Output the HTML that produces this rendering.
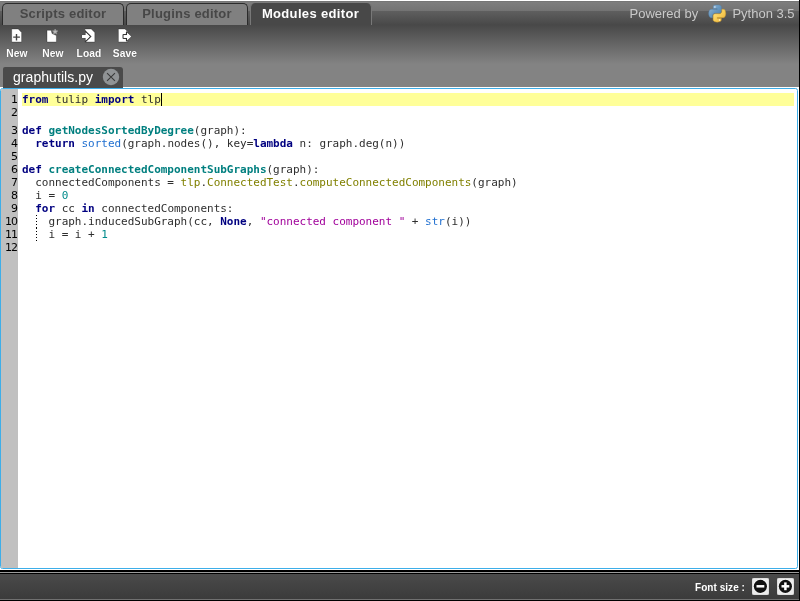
<!DOCTYPE html>
<html>
<head>
<meta charset="utf-8">
<title>Modules editor</title>
<style>
html,body{margin:0;padding:0;}
body{width:800px;height:601px;overflow:hidden;background:#000;position:relative;font-family:"Liberation Sans","DejaVu Sans",sans-serif;}
.abs{position:absolute;}
#root{position:absolute;left:0;top:0;width:799px;height:600px;background:#fff;overflow:hidden;will-change:transform;-webkit-font-smoothing:antialiased;}
#hdr{position:absolute;left:0;top:1px;width:799px;height:86px;
 background:linear-gradient(to bottom,#6d6d6d 0px,#7e7e7e 1px,#737373 10px,#5f5f5f 10px,#484848 24px,#838383 63px,#838383 86px);}
.tab{position:absolute;top:3px;height:21px;border:1px solid #2b2b2b;border-bottom:none;border-radius:5px 5px 0 0;background:#808080;
 color:#474747;font-weight:bold;font-size:13px;line-height:19px;text-align:center;white-space:nowrap;letter-spacing:.2px;}
.tab.act{background:#484848;border-color:#787878;border-top:none;height:22px;line-height:21px;color:#fff;}
.tb{position:absolute;top:47px;letter-spacing:.1px;width:36px;text-align:center;color:#fff;font-weight:bold;font-size:11px;line-height:12px;white-space:nowrap;
 text-shadow:0 0 1px rgba(40,40,40,.6);transform:scaleX(.93);transform-origin:50% 50%;}
.ico{position:absolute;top:27px;width:20px;height:16px;}
.pw{position:absolute;top:6px;color:#c9c9c9;font-size:13px;line-height:16px;white-space:nowrap;}
#ftab{position:absolute;left:3px;top:67px;width:120px;height:21px;background:#4a4a4a;border-radius:2px 3px 0 0;}
#ftab span{position:absolute;left:10px;top:0px;letter-spacing:.06px;color:#fff;font-size:14px;line-height:20px;white-space:nowrap;}
#ed{position:absolute;left:0;top:88px;width:796px;height:479px;border:1px solid #3daee9;border-radius:2.5px;background:#fff;overflow:hidden;}
#gut{position:absolute;left:0;top:0;width:17px;height:479px;background:#c0c0c0;}
.ln{position:absolute;left:0;width:17px;text-align:right;font-family:"DejaVu Sans",sans-serif;font-size:11px;line-height:13px;color:#000;height:13px;}
.cl{position:absolute;left:21px;font-family:"DejaVu Sans Mono","Liberation Mono",monospace;font-size:11px;line-height:13px;height:13px;white-space:pre;color:#2e2e2e;letter-spacing:-0.015px;}
.k{color:#000080;font-weight:bold;}
.f{color:#007f7f;font-weight:bold;}
.b{color:#1f6fd0;}
.o{color:#808000;}
.n{color:#008b8b;}
.s{color:#a0009a;}
#bot{position:absolute;left:0;top:569px;width:799px;height:31px;background:#000;}
#botg{position:absolute;left:0;top:5px;width:799px;height:25px;background:linear-gradient(to bottom,#4a4a4a,#3b3b3b);}
.sq{position:absolute;top:578px;width:17px;height:17px;background:#ececec;border-radius:2px;box-shadow:inset 0 0 0 .5px #d0d0d0;}
</style>
</head>
<body>
<div id="root">
 <div id="hdr"></div>

 <div class="tab" style="left:2px;width:120px;">Scripts editor</div>
 <div class="tab" style="left:126px;width:120px;">Plugins editor</div>
 <div class="tab act" style="left:250px;width:120px;letter-spacing:.34px;text-indent:-1px;">Modules editor</div>

 <div class="pw" style="left:629.5px;">Powered by</div>
 <div class="pw" style="left:732.4px;">Python 3.5</div>
 <svg class="abs" style="left:708px;top:4px;" width="20" height="20" viewBox="0 0 20 20"><g transform="translate(.7,.9) scale(.1535)">
  <defs>
   <linearGradient id="pb" x1="0" y1="0" x2="1" y2="1"><stop offset="0" stop-color="#9cbedb"/><stop offset=".5" stop-color="#6898c0"/><stop offset="1" stop-color="#4c7ba5"/></linearGradient>
   <linearGradient id="py" x1="0" y1="0" x2="1" y2="1"><stop offset="0" stop-color="#ffe98f"/><stop offset=".55" stop-color="#f8cb52"/><stop offset="1" stop-color="#e4ab38"/></linearGradient>
  </defs>
  <path fill="url(#pb)" stroke="#5480a6" stroke-width="3" d="M54.9 0C50.3 0 46 .4 42.100000000000001 1.1C30.8 3.1 28.7 7.3 28.7 15V25.3H55.5V28.7H18.6C10.8 28.7 4 33.3 1.9 42.300000000000004C-.6 52.5 -.7 58.800000000000004 1.9 69.5C3.8 77.4 8.3 83.100000000000009 16.100000000000001 83.100000000000009H25.4V70.8C25.4 62 33 54.2 42.100000000000001 54.2H68.9C76.3 54.2 82.3 48.1 82.3 40.6V15C82.3 7.8 76.2 2.3 68.9 1.1C64.3 .3 59.5 0 54.9 0Z"/>
  <path fill="url(#py)" stroke="#c9962a" stroke-width="3" d="M85.6 28.7V40.6C85.6 49.800000000000004 77.8 57.6 68.9 57.6H42.100000000000001C34.800000000000004 57.6 28.7 63.800000000000004 28.7 71.2V96.7C28.7 104 35 108.3 42.100000000000001 110.3C50.6 112.8 58.7 113.3 68.9 110.3C75.6 108.4 82.3 104.5 82.3 96.7V86.5H55.5V83.100000000000009H95.7C103.5 83.100000000000009 106.4 77.7 109.100000000000009 69.5C111.9 61.1 111.8 53 109.100000000000009 42.300000000000004C107.2 34.5 103.5 28.7 95.7 28.7Z"/>
  <circle cx="40.4" cy="13.3" r="5.2" fill="#e8f0f8"/><circle cx="70.6" cy="98.4" r="5.2" fill="#fff8e0"/>
 </g></svg>

 <!-- toolbar -->
 <svg class="abs" style="left:0;top:26px;" width="150" height="20" viewBox="0 26 150 20">
  <g fill="#fff" stroke="rgba(0,0,0,.28)" stroke-width="1" stroke-linejoin="round">
   <path d="M11.7 29H18.2L21.6 32.4V42H11.7Z"/>
   <path d="M47 30.3H51.2L52 33.5L56.4 35.5V42H47Z"/>
   <path d="M84.9 29H91.2L94.8 32.4V42H84.9Z"/>
   <path d="M118.4 29H125L127.8 31.8V42H118.4Z"/>
  </g>
  <path d="M13.2 37.1H19.9M16.5 34V40.4" stroke="#444" stroke-width="1.4" fill="none"/>
  <path d="M55.15 29.00L55.94 30.66L57.77 30.90L56.43 32.17L56.77 33.97L55.15 33.10L53.53 33.97L53.87 32.17L52.53 30.90L54.36 30.66Z" fill="#bdbdbd" stroke="#969696" stroke-width=".7" stroke-linejoin="round"/>
  <clipPath id="c3"><path d="M84.9 29H91.2L94.8 32.4V42H84.9Z"/></clipPath>
  <clipPath id="c4"><path d="M118.4 29H125L127.8 31.8V42H118.4Z"/></clipPath>
  <path d="M80 35H85.6V32.2L90 36.5L85.6 40.8V38H80Z" fill="none" stroke="#383838" stroke-width="2.2" clip-path="url(#c3)"/>
  <path d="M82 35H85.6V32.2L90 36.5L85.6 40.8V38H82Z" fill="#fff" stroke="rgba(0,0,0,.18)" stroke-width=".8"/>
  <path d="M82 35.2H85.8V32.8L89.6 36.5L85.8 40.2V37.8H82Z" fill="#fff"/>
  <path d="M123.6 35H127V32.4L131.2 36.5L127 40.6V38H123.6Z" fill="none" stroke="#383838" stroke-width="2.2" stroke-linejoin="round" clip-path="url(#c4)"/>
  <path d="M123.6 35H127V32.4L131.2 36.5L127 40.6V38H123.6Z" fill="#fff" stroke="rgba(0,0,0,.18)" stroke-width=".8"/>
  <path d="M123.8 35.2H127.2V33L130.8 36.5L127.2 40V37.8H123.8Z" fill="#fff"/>
 </svg>
 <div class="tb" style="left:-1.2px;">New</div>
 <div class="tb" style="left:34.8px;">New</div>
 <div class="tb" style="left:70.8px;">Load</div>
 <div class="tb" style="left:107px;">Save</div>

 <!-- file tab -->
 <div class="abs" style="left:0;top:87px;width:799px;height:1px;background:#fff;"></div>
 <div id="ftab"><span>graphutils.py</span>
  <svg class="abs" style="left:99px;top:1px;" width="18" height="18" viewBox="0 0 18 18"><circle cx="9" cy="9" r="8.2" fill="#909395"/><path d="M5.05 5.05L12.95 12.95M12.95 5.05L5.05 12.95" stroke="#383838" stroke-width="1.05"/></svg>
 </div>

 <!-- editor -->
 <div id="ed">
  <div id="gut"></div>
  <div class="abs" style="left:0;top:-1px;width:796px;height:480px;">
  <div class="abs" style="left:21px;top:5px;width:772px;height:13px;background:#ffff99;"></div>
  <div class="ln" style="top:5px;">1</div>
  <div class="ln" style="top:18px;">2</div>
  <div class="ln" style="top:36px;">3</div>
  <div class="ln" style="top:49px;">4</div>
  <div class="ln" style="top:62px;">5</div>
  <div class="ln" style="top:75px;">6</div>
  <div class="ln" style="top:88px;">7</div>
  <div class="ln" style="top:101px;">8</div>
  <div class="ln" style="top:114px;">9</div>
  <div class="ln" style="top:127px;letter-spacing:-1px;width:16px;">10</div>
  <div class="ln" style="top:140px;letter-spacing:-1px;width:16px;">11</div>
  <div class="ln" style="top:153px;letter-spacing:-1px;width:16px;">12</div>

  <div class="cl" style="top:5px;"><span class="k">from</span> tulip <span class="k">import</span> tlp</div>
  <div class="abs" style="left:160px;top:5px;width:1px;height:13px;background:#000;"></div>
  <div class="cl" style="top:36px;"><span class="k">def</span> <span class="f">getNodesSortedByDegree</span>(graph):</div>
  <div class="cl" style="top:49px;">  <span class="k">return</span> <span class="b">sorted</span>(graph.nodes(), key=<span class="k">lambda</span> n: graph.deg(n))</div>
  <div class="cl" style="top:75px;"><span class="k">def</span> <span class="f">createConnectedComponentSubGraphs</span>(graph):</div>
  <div class="cl" style="top:88px;">  connectedComponents = <span class="o">tlp</span>.<span class="o">ConnectedTest</span>.<span class="o">computeConnectedComponents</span>(graph)</div>
  <div class="cl" style="top:101px;">  i = <span class="n">0</span></div>
  <div class="cl" style="top:114px;">  <span class="k">for</span> cc <span class="k">in</span> connectedComponents:</div>
  <div class="cl" style="top:127px;">    graph.inducedSubGraph(cc, <span class="k">None</span>, <span class="s">"connected component "</span> + <span class="b">str</span>(i))</div>
  <div class="cl" style="top:140px;">    i = i + <span class="n">1</span></div>
  <div class="abs" style="left:35px;top:127px;width:1px;height:13px;background:repeating-linear-gradient(to bottom,#000 0,#000 1px,transparent 1px,transparent 3px);"></div>
  <div class="abs" style="left:35px;top:140px;width:1px;height:13px;background:repeating-linear-gradient(to bottom,#000 0,#000 1px,transparent 1px,transparent 3px);"></div>
  </div>
 </div>

 <!-- bottom bar -->
 <div id="bot">
  <div class="abs" style="left:0;top:0;width:799px;height:1px;background:#fff;"></div>
  <div class="abs" style="left:0;top:3px;width:799px;height:1px;background:#9c9c9c;"></div>
  <div id="botg"></div>
  <div class="abs" style="left:0;top:30px;width:799px;height:1px;background:#707070;"></div>
 </div>
 <div class="abs" style="left:695px;top:581px;color:#fff;font-weight:bold;font-size:10px;letter-spacing:.05px;line-height:13px;white-space:nowrap;">Font size :</div>
 <div class="sq" style="left:752px;"><svg class="abs" style="left:0;top:0;" width="17" height="17" viewBox="0 0 17 17"><circle cx="8.4" cy="8.3" r="7.1" fill="#fff"/><circle cx="8.4" cy="8.3" r="6.6" fill="#111"/><rect x="4.5" y="7.05" width="7.8" height="2.5" fill="#fff"/></svg></div>
 <div class="sq" style="left:777px;"><svg class="abs" style="left:0;top:0;" width="17" height="17" viewBox="0 0 17 17"><circle cx="8.4" cy="8.3" r="7.1" fill="#fff"/><circle cx="8.4" cy="8.3" r="6.6" fill="#111"/><rect x="4.5" y="7.05" width="7.8" height="2.5" fill="#fff"/><rect x="7.15" y="4.4" width="2.5" height="7.8" fill="#fff"/></svg></div>
</div>
</body>
</html>
